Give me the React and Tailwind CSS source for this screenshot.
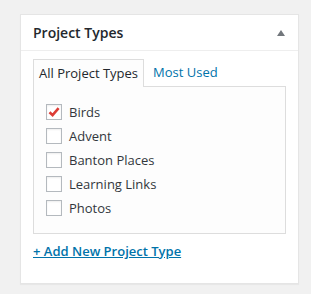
export default function App() {
  const items = [
    { label: "Birds", checked: true },
    { label: "Advent" },
    { label: "Banton Places" },
    { label: "Learning Links" },
    { label: "Photos" },
  ];
  return (
    <div
      className="w-[311px] h-[294px] bg-[#f1f1f1] pt-[14px] pl-[20px]"
      style={{ fontFamily: '"Open Sans", "Noto Sans", sans-serif' }}
    >
      <div className="w-[279px] h-[270px] bg-white border border-[#e5e5e5] shadow-[0_1px_1px_rgba(0,0,0,0.04)]">
        <div className="h-[36px] border-b border-[#eeeeee] flex items-center justify-between pl-[12px] pr-[12px]">
          <span className="text-[14px] font-semibold text-[#23282d] leading-none">Project Types</span>
          <svg width="8" height="6" viewBox="0 0 8 6" className="mr-[1px] mt-[1px]">
            <polygon points="4,0 8,6 0,6" fill="#72777c" />
          </svg>
        </div>
        <div className="px-[12px] pt-[8px]">
          <div className="flex items-end h-[27px] text-[13px]">
            <div className="relative z-10 h-[28px] -mb-px border border-b-0 border-[#dddddd] bg-[#fdfdfd] px-[5px] flex items-center text-[#23282d]">
              All Project Types
            </div>
            <div className="h-[27px] px-[9px] flex items-center text-[#0073aa]">Most Used</div>
          </div>
          <div className="h-[148px] border border-[#dddddd] bg-[#fdfdfd] pt-[13px] pl-[12px]">
            {items.map((it) => (
              <div key={it.label} className="h-[24px] flex items-center gap-[7px]">
                <div className="w-[16px] h-[16px] border border-[#b4b9be] bg-white shadow-[inset_0_1px_2px_rgba(0,0,0,0.07)] flex items-center justify-center">
                  {it.checked && (
                    <svg width="14" height="14" viewBox="0 0 14 14">
                      <path d="M2.5 7.2 L5.6 10.2 L11.6 3.2" fill="none" stroke="#dd3d36" strokeWidth="2.6" strokeLinecap="butt" strokeLinejoin="miter" />
                    </svg>
                  )}
                </div>
                <span className="text-[13px] text-[#32373c] leading-none">{it.label}</span>
              </div>
            ))}
          </div>
          <div className="mt-[6px] leading-[20px]">
            <a href="#" className="text-[13px] font-semibold text-[#0073aa] underline">
              + Add New Project Type
            </a>
          </div>
        </div>
      </div>
    </div>
  );
}
